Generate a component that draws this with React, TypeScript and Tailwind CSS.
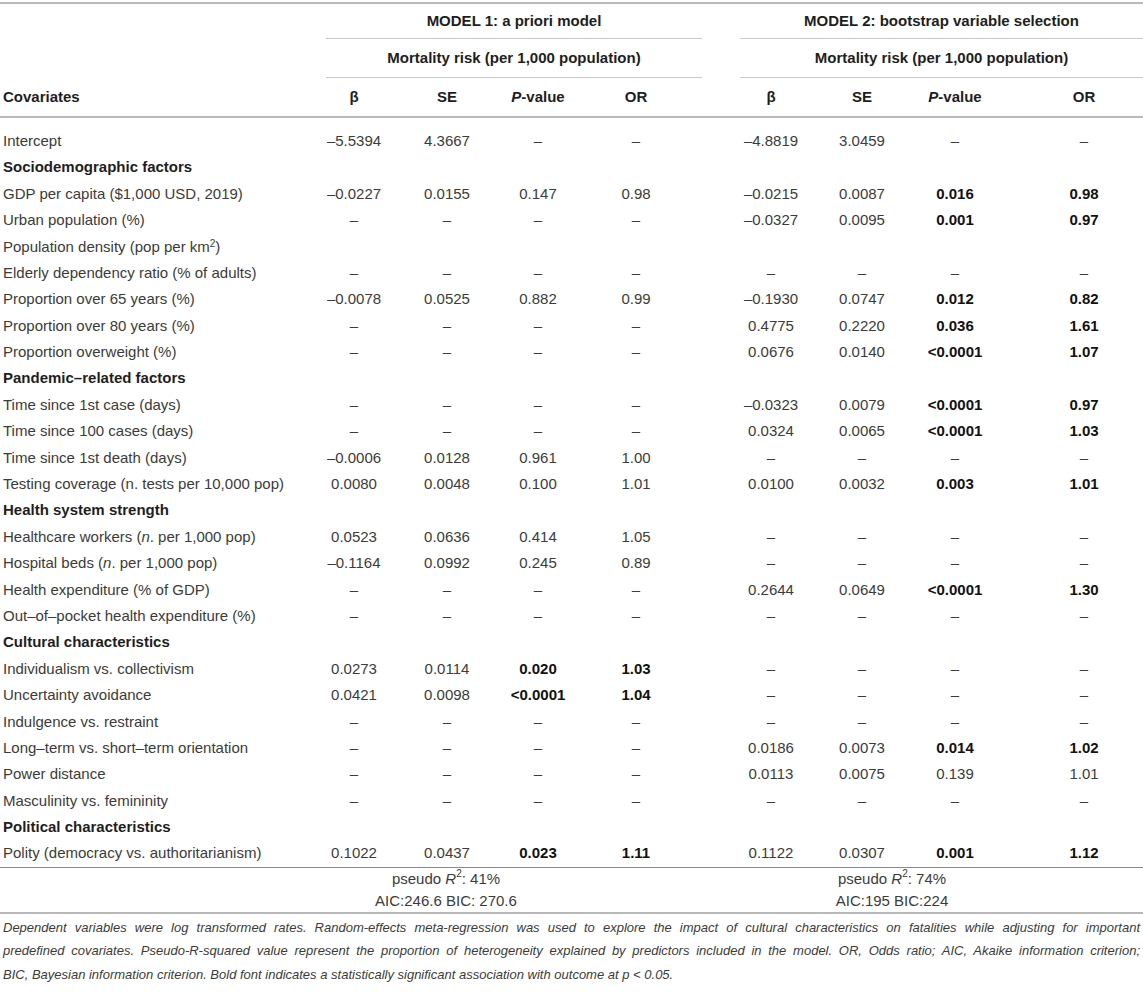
import React from 'react';

type Cell = string | { v: string; b: boolean };

type Row =
    | { kind: 'section'; label: string }
    | { kind: 'data'; label: React.ReactNode; cells: Cell[] };

const D = '–';
const dash4: Cell[] = [D, D, D, D];
const blank4: Cell[] = ['', '', '', ''];
const B = (v: string): Cell => ({ v, b: true });

const rows: Row[] = [
    { kind: 'data', label: 'Intercept', cells: ['–5.5394', '4.3667', D, D, '–4.8819', '3.0459', D, D] },
    { kind: 'section', label: 'Sociodemographic factors' },
    { kind: 'data', label: 'GDP per capita ($1,000 USD, 2019)', cells: ['–0.0227', '0.0155', '0.147', '0.98', '–0.0215', '0.0087', B('0.016'), B('0.98')] },
    { kind: 'data', label: 'Urban population (%)', cells: [...dash4, '–0.0327', '0.0095', B('0.001'), B('0.97')] },
    { kind: 'data', label: <>Population density (pop per km<sup className="text-[10px]">2</sup>)</>, cells: [...blank4, ...blank4] },
    { kind: 'data', label: 'Elderly dependency ratio (% of adults)', cells: [...dash4, ...dash4] },
    { kind: 'data', label: 'Proportion over 65 years (%)', cells: ['–0.0078', '0.0525', '0.882', '0.99', '–0.1930', '0.0747', B('0.012'), B('0.82')] },
    { kind: 'data', label: 'Proportion over 80 years (%)', cells: [...dash4, '0.4775', '0.2220', B('0.036'), B('1.61')] },
    { kind: 'data', label: 'Proportion overweight (%)', cells: [...dash4, '0.0676', '0.0140', B('<0.0001'), B('1.07')] },
    { kind: 'section', label: 'Pandemic–related factors' },
    { kind: 'data', label: 'Time since 1st case (days)', cells: [...dash4, '–0.0323', '0.0079', B('<0.0001'), B('0.97')] },
    { kind: 'data', label: 'Time since 100 cases (days)', cells: [...dash4, '0.0324', '0.0065', B('<0.0001'), B('1.03')] },
    { kind: 'data', label: 'Time since 1st death (days)', cells: ['–0.0006', '0.0128', '0.961', '1.00', ...dash4] },
    { kind: 'data', label: 'Testing coverage (n. tests per 10,000 pop)', cells: ['0.0080', '0.0048', '0.100', '1.01', '0.0100', '0.0032', B('0.003'), B('1.01')] },
    { kind: 'section', label: 'Health system strength' },
    { kind: 'data', label: <>Healthcare workers (<i>n</i>. per 1,000 pop)</>, cells: ['0.0523', '0.0636', '0.414', '1.05', ...dash4] },
    { kind: 'data', label: <>Hospital beds (<i>n</i>. per 1,000 pop)</>, cells: ['–0.1164', '0.0992', '0.245', '0.89', ...dash4] },
    { kind: 'data', label: 'Health expenditure (% of GDP)', cells: [...dash4, '0.2644', '0.0649', B('<0.0001'), B('1.30')] },
    { kind: 'data', label: 'Out–of–pocket health expenditure (%)', cells: [...dash4, ...dash4] },
    { kind: 'section', label: 'Cultural characteristics' },
    { kind: 'data', label: 'Individualism vs. collectivism', cells: ['0.0273', '0.0114', B('0.020'), B('1.03'), ...dash4] },
    { kind: 'data', label: 'Uncertainty avoidance', cells: ['0.0421', '0.0098', B('<0.0001'), B('1.04'), ...dash4] },
    { kind: 'data', label: 'Indulgence vs. restraint', cells: [...dash4, ...dash4] },
    { kind: 'data', label: 'Long–term vs. short–term orientation', cells: [...dash4, '0.0186', '0.0073', B('0.014'), B('1.02')] },
    { kind: 'data', label: 'Power distance', cells: [...dash4, '0.0113', '0.0075', '0.139', '1.01'] },
    { kind: 'data', label: 'Masculinity vs. femininity', cells: [...dash4, ...dash4] },
    { kind: 'section', label: 'Political characteristics' },
    { kind: 'data', label: 'Polity (democracy vs. authoritarianism)', cells: ['0.1022', '0.0437', B('0.023'), B('1.11'), '0.1122', '0.0307', B('0.001'), B('1.12')] },
];

// widths of the 8 number columns; ml on the first column of each model
const colClass = [
    'w-[88px]',
    'w-[98px]',
    'w-[84px]',
    'w-[112px]',
    'w-[102px] ml-[28px]',
    'w-[80px]',
    'w-[106px]',
    'w-[118px] ml-[17px]',
];

function NumCell({ cell, i }: { cell: Cell; i: number }) {
    const bold = typeof cell !== 'string' && cell.b;
    const v = typeof cell === 'string' ? cell : cell.v;
    return (
        <div className={`${colClass[i]} flex justify-center whitespace-nowrap ${bold ? 'font-bold text-[#111]' : ''}`}>
            {v}
        </div>
    );
}

function App() {
    const heads: React.ReactNode[] = ['β', 'SE', <><i>P</i>-value</>, 'OR', 'β', 'SE', <><i>P</i>-value</>, 'OR'];

    return (
        <div className="w-[1143px] h-[995px] bg-white text-[15px] text-[#3b3b3b] font-['Liberation_Sans',Arial,sans-serif] overflow-hidden">
            <div className="mt-[2px] border-t-2 border-[#b9b9b9]">
                {/* model titles */}
                <div className="flex h-[35px] items-center font-bold text-[#1e1e1e]">
                    <div className="w-[326px]" />
                    <div className="w-[376px] h-full flex items-center justify-center border-b border-[#c8c8c8]">MODEL 1: a priori model</div>
                    <div className="w-[403px] ml-[38px] h-full flex items-center justify-center border-b border-[#c8c8c8]">MODEL 2: bootstrap variable selection</div>
                </div>
                <div className="flex h-[39px] items-center font-bold text-[#1e1e1e]">
                    <div className="w-[326px]" />
                    <div className="w-[376px] h-full flex items-center justify-center border-b border-[#c8c8c8]">Mortality risk (per 1,000 population)</div>
                    <div className="w-[403px] ml-[38px] h-full flex items-center justify-center border-b border-[#c8c8c8]">Mortality risk (per 1,000 population)</div>
                </div>
                <div className="flex h-[40px] items-center font-bold text-[#1e1e1e] border-b-2 border-[#b9b9b9]">
                    <div className="w-[310px] pl-[3px]">Covariates</div>
                    {heads.map((h, i) => (
                        <div key={i} className={`${colClass[i]} flex justify-center whitespace-nowrap`}>{h}</div>
                    ))}
                </div>

                {/* body */}
                <div className="pt-[10px] border-b border-[#8a8a8a]">
                    {rows.map((r, idx) =>
                        r.kind === 'section' ? (
                            <div key={idx} className="h-[26.4px] flex items-center pl-[3px] font-bold text-[#1e1e1e]">{r.label}</div>
                        ) : (
                            <div key={idx} className="h-[26.4px] flex items-center">
                                <div className="w-[310px] pl-[3px] whitespace-nowrap">{r.label}</div>
                                {r.cells.map((c, i) => (
                                    <NumCell key={i} cell={c} i={i} />
                                ))}
                            </div>
                        )
                    )}
                </div>

                {/* fit stats */}
                <div className="flex border-b-2 border-[#b9b9b9]">
                    <div className="w-[326px]" />
                    <div className="w-[240px] flex flex-col items-center">
                        <div className="h-[22px] flex items-center">pseudo&nbsp;<i>R</i><sup className="text-[10px]">2</sup>: 41%</div>
                        <div className="h-[22px] flex items-center">AIC:246.6 BIC: 270.6</div>
                    </div>
                    <div className="w-[200px] ml-[226px] flex flex-col items-center">
                        <div className="h-[22px] flex items-center">pseudo&nbsp;<i>R</i><sup className="text-[10px]">2</sup>: 74%</div>
                        <div className="h-[22px] flex items-center">AIC:195 BIC:224</div>
                    </div>
                </div>
            </div>

            {/* footnote */}
            <div className="pt-[2px] pl-[3px] pr-[3px] italic text-[13px] leading-[23.5px] text-[#3b3b3b]">
                <div className="text-justify [text-align-last:justify]">
                    Dependent variables were log transformed rates. Random-effects meta-regression was used to explore the impact of cultural characteristics on fatalities while adjusting for important
                </div>
                <div className="text-justify [text-align-last:justify]">
                    predefined covariates. Pseudo-R-squared value represent the proportion of heterogeneity explained by predictors included in the model. OR, Odds ratio; AIC, Akaike information criterion;
                </div>
                <div>
                    BIC, Bayesian information criterion. Bold font indicates a statistically significant association with outcome at <i>p</i> &lt; 0.05.
                </div>
            </div>
        </div>
    );
}

export default App;
